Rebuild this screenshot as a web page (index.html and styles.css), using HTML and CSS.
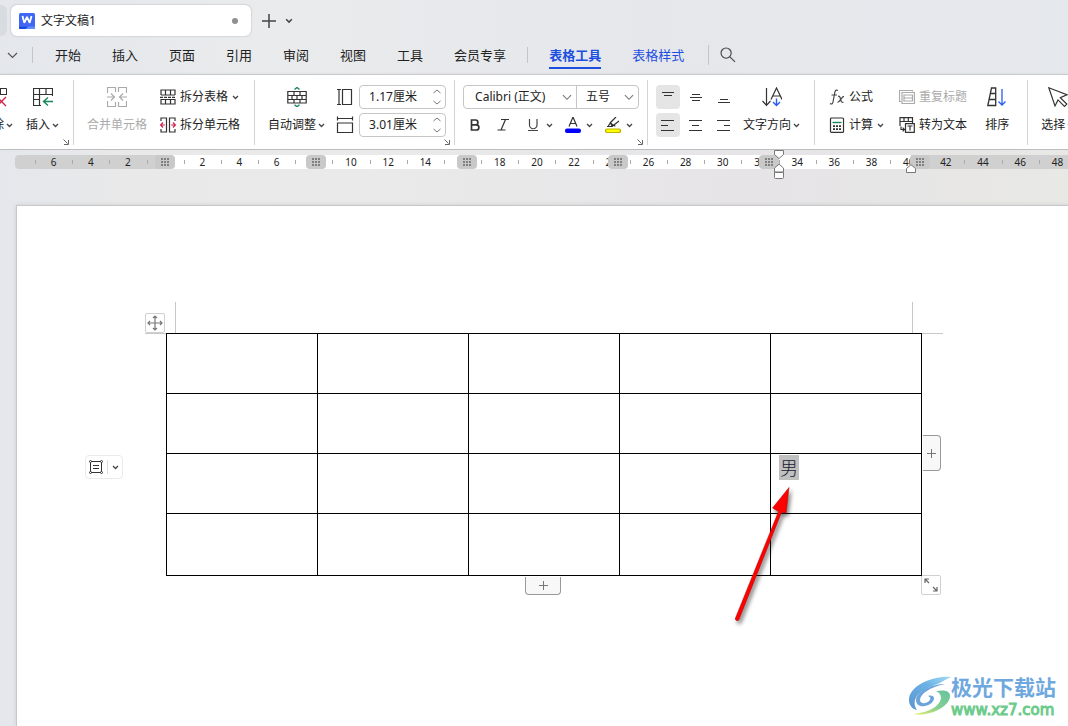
FILE: index.html
```html
<!DOCTYPE html>
<html lang="zh-CN">
<head>
<meta charset="utf-8">
<title>文字文稿1</title>
<link rel="stylesheet" href="styles.css">
</head>
<body>
<svg class="defs" aria-hidden="true">
  <symbol id="chev" viewBox="0 0 7 5"><path d="M1 1l2.500 2.500L6 1" fill="none" stroke="currentColor" stroke-width="1.300"/></symbol>
  <symbol id="wide" viewBox="0 0 11 7"><path d="M1 1l4.500 4.500L10 1" fill="none" stroke="currentColor" stroke-width="1.200"/></symbol>
  <symbol id="launch" viewBox="0 0 6 6"><path d="M.5.5l4 4M5.500 1v4.500H1" fill="none" stroke="currentColor"/></symbol>
  <symbol id="dots" viewBox="0 0 8 8"><path d="M0 1h2M3 1h2M6 1h2M0 4h2M3 4h2M6 4h2M0 7h2M3 7h2M6 7h2" stroke="#808080" stroke-width="2"/></symbol>
  <symbol id="indent" viewBox="0 0 10 9"><path d="M.5 8.500v-4L5 .7l4.500 3.800v4z" fill="#fff" stroke="#777"/></symbol>
</svg>

<header class="titlebar">
  <span class="tab-stub"></span>
  <div class="doc-tab">
    <svg class="logo" viewBox="0 0 16 16"><rect width="16" height="16" rx="1.500" fill="#3f66f5"/><path d="M0 13.500h16V15a1 1 0 0 1-1 1H1a1 1 0 0 1-1-1z" fill="#5c8dfb"/><path d="M0 13.500h9L6.500 16H1a1 1 0 0 1-1-1z" fill="#1747dd"/><path d="M3.500 3l1.800 6.800L8 4l2.700 5.800L12.500 3" fill="none" stroke="#fff" stroke-width="1.800" stroke-linejoin="bevel"/></svg>
    <span class="doc-name">文字文稿1</span>
    <span class="unsaved"></span>
  </div>
  <button class="plain new-tab" aria-label="新建"><svg width="14" height="14"><path d="M7 0v14M0 7h14" stroke="#444" stroke-width="1.500"/></svg></button>
  <button class="plain" aria-label="标签列表"><svg class="chev big-chev"><use href="#chev"/></svg></button>
</header>

<nav class="menubar">
  <button class="plain" aria-label="更多"><svg class="wide-chev"><use href="#wide"/></svg></button>
  <span class="sep first"></span>
  <button class="plain">开始</button>
  <button class="plain">插入</button>
  <button class="plain">页面</button>
  <button class="plain">引用</button>
  <button class="plain">审阅</button>
  <button class="plain">视图</button>
  <button class="plain">工具</button>
  <button class="plain">会员专享</button>
  <span class="sep mid"></span>
  <button class="plain context active">表格工具</button>
  <button class="plain context">表格样式</button>
  <span class="sep last"></span>
  <button class="plain search" aria-label="搜索"><svg width="16" height="16" viewBox="0 0 17 17" fill="none" stroke="#444" stroke-width="1.200"><circle cx="6.500" cy="6.500" r="5.400"/><path d="M10.500 10.500l5.500 5.300"/></svg></button>
</nav>

<section class="ribbon">
  <div class="group g-edit">
    <button class="big">
      <svg width="20" height="20" viewBox="0 0 20 20" fill="none" stroke="#333"><path d="M8 18.500H.5v-17h19V8M.5 7.500h19M6.500 1.500v17M.5 12.500h10M13.500 1.500v6"/><path d="M10 10l9 9M19 10l-9 9" stroke="#d4224c" stroke-width="1.300"/></svg>
      <span class="label">删除<svg class="chev"><use href="#chev"/></svg></span>
    </button>
    <button class="big">
      <svg width="20" height="20" viewBox="0 0 20 20" fill="none" stroke="#333" stroke-width="1.200"><path d="M8 18.500H.5v-17h19V9M.5 7.500h19M6.500 1.500v17M.5 12.500h6M13 1.500v6"/><path d="M20 14.500h-9M15 10.500l-4.500 4 4.500 4" stroke="#16885a" stroke-width="1.400"/></svg>
      <span class="label">插入<svg class="chev"><use href="#chev"/></svg></span>
    </button>
    <svg class="launcher"><use href="#launch"/></svg>
  </div>

  <div class="group g-merge">
    <button class="big" disabled>
      <svg width="20" height="20" viewBox="0 0 20 20" fill="none" stroke="#aaa" stroke-width="1.200"><path d="M.5 6V.5h8V5M11.500 5V.5h8V6M.5 14v5.500h8V15M11.500 15v4.500h8V14M0 10h7M4 6.500L7.500 10 4 13.500M20 10h-7M16 6.500L12.500 10l3.500 3.500"/></svg>
      <span class="label">合并单元格</span>
    </button>
    <div class="stack">
      <button class="line">
        <svg width="16" height="16" viewBox="0 0 16 16" fill="none" stroke="#333" stroke-width="1.200"><path d="M1 6V1h14v5M1 6h14M5.500 1v5M10.500 1v5M1 10.500h14V15H1zM5.500 10.500V15M10.500 10.500V15"/><path d="M0 8.300h16" stroke-dasharray="3 1"/></svg>
        拆分表格<svg class="chev"><use href="#chev"/></svg>
      </button>
      <button class="line">
        <svg width="16" height="16" viewBox="0 0 16 16" fill="none" stroke="#333" stroke-width="1.200"><path d="M1 4V1h5.500v14H1v-3M15 4V1H9.500v14H15v-3"/><path d="M5 8H1M3 5.500L.7 8 3 10.500M11 8H15M13 5.500L15.300 8 13 10.500" stroke="#d4224c"/></svg>
        拆分单元格
      </button>
    </div>
  </div>

  <div class="group g-size">
    <button class="big">
      <svg width="20" height="20" viewBox="0 0 20 20" fill="none" stroke="#333" stroke-width="1.200"><path d="M.8 4.500h18.400v11.500H.8zM.8 8.500h18.400M.8 12.500h18.400M7 4.500v4M13 4.500v4M10 8.500v4M5 8.500v4M15 8.500v4M7 12.500V16M13 12.500V16"/><path d="M7.500 2.500L10 .5l2.500 2M7.500 17.700l2.500 2 2.500-2" stroke="#16885a" stroke-width="1.400"/></svg>
      <span class="label">自动调整<svg class="chev"><use href="#chev"/></svg></span>
    </button>
    <div class="stack">
      <label class="field">
        <svg width="18" height="18" viewBox="0 0 18 18" fill="none" stroke="#333" stroke-width="1.200"><path d="M3 1.500v15M1 1.500h4M1 16.500h4M6.500 1.500h9v15h-9z"/></svg>
        <span class="spin"><input type="text" value="1.17厘米" aria-label="高度"><span class="arrows"><svg viewBox="0 0 8 5"><path d="M.5 4L4 1l3.500 3" fill="none" stroke="#777"/></svg><svg viewBox="0 0 8 5"><path d="M.5 1L4 4l3.500-3" fill="none" stroke="#777"/></svg></span></span>
      </label>
      <label class="field">
        <svg width="18" height="18" viewBox="0 0 18 18" fill="none" stroke="#333" stroke-width="1.200"><path d="M1.500 2.500h15M1.500.5v4M16.500.5v4M1.500 7h15v9.500h-15z"/></svg>
        <span class="spin"><input type="text" value="3.01厘米" aria-label="宽度"><span class="arrows"><svg viewBox="0 0 8 5"><path d="M.5 4L4 1l3.500 3" fill="none" stroke="#777"/></svg><svg viewBox="0 0 8 5"><path d="M.5 1L4 4l3.500-3" fill="none" stroke="#777"/></svg></span></span>
      </label>
    </div>
    <svg class="launcher"><use href="#launch"/></svg>
  </div>

  <div class="group g-font">
    <div class="stack">
      <div class="row">
        <div class="combo">
          <span class="pick family"><select aria-label="字体"><option>Calibri (正文)</option></select><svg class="pick-chev"><use href="#wide"/></svg></span>
          <span class="pick size"><select aria-label="字号"><option>五号</option></select><svg class="pick-chev"><use href="#wide"/></svg></span>
        </div>
      </div>
      <div class="row formats">
        <button class="fmt" aria-label="加粗"><svg width="16" height="16" viewBox="0 0 16 16" fill="none" stroke="#333" stroke-width="1.700"><path d="M4.500 3h4a2.400 2.400 0 0 1 0 4.800h-4zM4.500 7.800h4.800a2.500 2.500 0 0 1 0 5.200H4.500z"/></svg></button>
        <button class="fmt" aria-label="倾斜"><svg width="18" height="16" viewBox="0 0 18 16" fill="none" stroke="#333" stroke-width="1.200"><path d="M6 2.500h8M2.500 13h8M10.500 2.500L6 13"/></svg></button>
        <button class="fmt" aria-label="下划线"><svg width="16" height="16" viewBox="0 0 16 16" fill="none" stroke="#444" stroke-width="1.200"><path d="M4.500 2v6a3.500 3.500 0 0 0 7.500 0V2M3 13.500h10"/></svg><svg class="chev"><use href="#chev"/></svg></button>
        <button class="fmt" aria-label="字体颜色"><svg width="16" height="16" viewBox="0 0 16 16" fill="none" stroke="#333" stroke-width="1.200"><path d="M4 9.500L8 0l4 9.500M5.300 6.500h5.400"/><rect y="11.500" width="16" height="4.500" rx="2" fill="#00f" stroke="none"/></svg><svg class="chev"><use href="#chev"/></svg></button>
        <button class="fmt" aria-label="突出显示"><svg width="16" height="16" viewBox="0 0 16 16" fill="none" stroke="#333" stroke-width="1.200"><path d="M2 9.500h5L5.500 5.500 11 0M7 9.500L14 4M3 9.500l2.500-4 2.500 3M9 7l1 2.500"/><rect x=".5" y="12" width="15" height="3.500" rx="1.700" fill="#ff0" stroke="#bbb500"/></svg><svg class="chev"><use href="#chev"/></svg></button>
      </div>
    </div>
    <svg class="launcher"><use href="#launch"/></svg>
  </div>

  <div class="group g-align">
    <div class="aligns">
      <button class="tool on" aria-label="靠上"><svg viewBox="0 0 14 14"><path d="M1 2.500h12M3 5.500h8"/></svg></button>
      <button class="tool" aria-label="垂直居中"><svg viewBox="0 0 14 14"><path d="M3 4.500h8M1 7.500h12M3 10.500h8"/></svg></button>
      <button class="tool" aria-label="靠下"><svg viewBox="0 0 14 14"><path d="M3 9.500h8M1 12.500h12"/></svg></button>
      <button class="tool on" aria-label="左对齐"><svg viewBox="0 0 14 14"><path d="M0 2.500h13M0 7.500h7M0 12.500h13"/></svg></button>
      <button class="tool" aria-label="水平居中"><svg viewBox="0 0 14 14"><path d="M0 2.500h13M3 7.500h7M0 12.500h13"/></svg></button>
      <button class="tool" aria-label="右对齐"><svg viewBox="0 0 14 14"><path d="M0 2.500h13M7 7.500h6M0 12.500h13"/></svg></button>
    </div>
    <button class="big">
      <svg width="20" height="20" viewBox="0 0 20 20" fill="none" stroke="#333" stroke-width="1.200"><path d="M4.500 1v17M.5 14l4 4.300 4-4.300M9 12.500L14.500 1 20 12.500M10.500 9h8"/><path d="M14.500 11.500v7M11 15l3.500 3.500L18 15" stroke="#2a5cf0" stroke-width="1.400"/></svg>
      <span class="label">文字方向<svg class="chev"><use href="#chev"/></svg></span>
    </button>
  </div>

  <div class="group g-data">
    <div class="stack">
      <button class="line">
        <svg width="16" height="16" viewBox="0 0 16 16" fill="none" stroke="#444" stroke-width="1.200"><path d="M9 1.500C7 .3 6.200 1.500 5.800 3.500L4 13c-.4 2-1.500 2.500-3 1.500M2.500 6H8M9 7.500c1.500-.8 2 .2 2.500 2.500s1 4 3 3M15 7.300c-2.500 0-4 6-6.500 6"/></svg>
        公式
      </button>
      <button class="line">
        <svg width="16" height="16" viewBox="0 0 16 16" fill="none" stroke="#333" stroke-width="1.200"><rect x="1.500" y="1" width="13" height="14.400" rx="1"/><path d="M3.500 5.500h9" stroke="#16885a" stroke-width="1.400"/><path d="M4 9.200h2M7 9.200h2M10 9.200h2M4 12.200h2M7 12.200h2M10 12.200h2" stroke-width="1.700"/></svg>
        计算<svg class="chev"><use href="#chev"/></svg>
      </button>
    </div>
    <div class="stack">
      <button class="line" disabled>
        <svg width="16" height="16" viewBox="0 0 16 16" fill="none" stroke="#aaa" stroke-width="1.200"><path d="M2 12.500H.5v-11h13v1M3 3.500h12.500v11H3zM5 6h8.500v6H5zM5 9h8.500"/></svg>
        重复标题
      </button>
      <button class="line">
        <svg width="16" height="16" viewBox="0 0 16 16" fill="none" stroke="#333" stroke-width="1.200"><path d="M1 9V.7h12.500V6M1 4.500h12.500M5 .7v3.800M9.300.7v3.800M6.500 6.700h8.800v8.700H6.500zM8.500 9h5M11 9v4.500M2 9.500v3h3M3.700 10.700l1.700 1.800-1.700 1.800"/></svg>
        转为文本
      </button>
    </div>
    <button class="big sort">
      <svg width="20" height="20" viewBox="0 0 20 20" fill="none" stroke="#333" stroke-width="1.300"><path d="M.8 18.500L4.500 1h4.200v17.500zM3.500 6.500h5M2 12.500h6.500"/><path d="M15 2v16M11.500 14.500L15 18l3.500-3.500" stroke="#2a5cf0"/></svg>
      <span class="label">排序</span>
    </button>
  </div>

  <div class="group g-select">
    <button class="big">
      <svg width="20" height="20" viewBox="0 0 20 20" fill="none" stroke="#333" stroke-width="1.200"><path d="M.8.8l18 7-6.500 2.800 6.500 6.500-2.300 2.300-6.500-6.500-3 6z"/></svg>
      <span class="label">选择<svg class="chev"><use href="#chev"/></svg></span>
    </button>
  </div>
</section>

<main class="workspace">
  <div class="ruler">
    <div class="scale">
      <span>6</span><span>4</span><span>2</span><span></span><span>2</span><span>4</span><span>6</span><span></span><span>10</span><span>12</span><span>14</span><span></span><span>18</span><span>20</span><span>22</span><span>24</span><span>26</span><span>28</span><span>30</span><span>32</span><span>34</span><span>36</span><span>38</span><span>40</span><span>42</span><span>44</span><span>46</span><span>48</span>
    </div>
    <span class="stop s1"><svg><use href="#dots"/></svg></span>
    <span class="stop s2"><svg><use href="#dots"/></svg></span>
    <span class="stop s3"><svg><use href="#dots"/></svg></span>
    <span class="stop s4"><svg><use href="#dots"/></svg></span>
    <span class="stop s5"><svg><use href="#dots"/></svg></span>
    <span class="stop s6"><svg><use href="#dots"/></svg></span>
    <svg class="indent-left" viewBox="0 0 10 30" fill="#fff" stroke="#777"><path d="M.5.5h9v4L5 8.500.5 4.500zM.5 22v-4L5 14.200 9.500 18v4zM.5 22.500h9v5a1 1 0 0 1-1 1h-7a1 1 0 0 1-1-1z"/></svg>
    <svg class="indent-right"><use href="#indent"/></svg>
  </div>

  <article class="sheet">
    <div class="table-wrap">
      <span class="crop tl"></span>
      <span class="crop tr"></span>
      <table class="grid">
        <tbody>
          <tr><td></td><td></td><td></td><td></td><td></td></tr>
          <tr><td></td><td></td><td></td><td></td><td></td></tr>
          <tr><td></td><td></td><td></td><td></td><td><span class="selected">男</span></td></tr>
          <tr class="tall"><td></td><td></td><td></td><td></td><td></td></tr>
        </tbody>
      </table>
      <button class="handle move" aria-label="移动表格"><svg width="16" height="16" viewBox="0 0 16 16" fill="none" stroke="#777" stroke-width="1.200"><path d="M8 1v14M1 8h14M6 3l2-2 2 2M6 13l2 2 2-2M3 6L1 8l2 2M13 6l2 2-2 2"/></svg></button>
      <button class="handle resize" aria-label="缩放表格"><svg width="16" height="16" viewBox="0 0 16 16" fill="none" stroke="#666" stroke-width="1.200"><path d="M6 6L2 2M2 6V2h4M10 10l4 4M14 10v4h-4"/></svg></button>
      <button class="handle add-col" aria-label="添加列"><svg width="9" height="9"><path d="M4.500 0v9M0 4.500h9" stroke="#777"/></svg></button>
      <button class="handle add-row" aria-label="添加行"><svg width="9" height="9"><path d="M4.500 0v9M0 4.500h9" stroke="#777"/></svg></button>
      <button class="handle options" aria-label="布局选项">
        <svg width="14" height="14" viewBox="0 0 14 14" fill="none" stroke="#333"><path d="M1.500 1.500h11v11h-11zM4 5.500h6M4 8.500h6"/><g fill="#fff"><circle cx="1.500" cy="1.500" r="1"/><circle cx="12.500" cy="1.500" r="1"/><circle cx="1.500" cy="12.500" r="1"/><circle cx="12.500" cy="12.500" r="1"/></g></svg>
        <span class="bar"></span>
        <svg class="chev"><use href="#chev"/></svg>
      </button>
      <svg class="arrow" viewBox="0 0 70 145"><path d="M8.500 132L51.500 25.500l-6-3.500L62 1.500 59 27l-4.500-.5L12 133.500a1.800 1.800 0 0 1-3.500-1.500z" fill="#f00" stroke="#a00" stroke-width=".5"/></svg>
    </div>
  </article>
</main>

<aside class="watermark">
  <svg width="42" height="42" viewBox="0 0 42 42">
    <defs>
      <linearGradient id="blue" x1="0" y1="1" x2="1" y2="0"><stop offset="0" stop-color="#5a94d2"/><stop offset=".6" stop-color="#6bb3e4"/><stop offset="1" stop-color="#a4dcf4"/></linearGradient>
      <linearGradient id="green" x1="0" y1="1" x2="1" y2="0"><stop offset="0" stop-color="#e9ee6a"/><stop offset=".5" stop-color="#84cf93"/><stop offset="1" stop-color="#66c2a0"/></linearGradient>
    </defs>
    <path d="M42 2C26 0 0 10 0 25c0 5 3 9 8 10-5-7-2-15 7-20C22 11 30 9 36 5z" fill="url(#blue)"/>
    <path d="M36 9C22 9 7 17 7 25c0 5 4 7 9 6 5-1 9-4 9-8 0-2-3-3-6-2 3 1 3 3 1 5-3 3-9 3-9-1 0-6 10-13 25-16z" fill="#6ba4dc"/>
    <path d="M27 16c7-1 14-1 14 5C41 31 22 42 4 39c10-1 21-4 26-11 3-4 3-9-3-12z" fill="url(#green)"/>
  </svg>
  <div class="mark-text"><span class="mark-name">极光下载站</span><span class="mark-url">www.xz7.com</span></div>
</aside>
</body>
</html>
```
FILE: styles.css
```css
* { box-sizing: border-box; }

body {
  position: relative;
  display: flex;
  flex-direction: column;
  min-height: 100vh;
  margin: 0;
  overflow: hidden;
  background: linear-gradient(90deg, #e4e7ec, #e9ebec 25%, #e6e7eb 60%, #e5e8ed);
  color: #222;
  font: 12px/16px "Noto Sans", "Noto Sans CJK SC", sans-serif;
}

svg { display: block; flex: none; }
.defs { position: absolute; width: 0; height: 0; }

button, input, select { font: inherit; color: inherit; }
button {
  display: flex;
  align-items: center;
  margin: 0;
  padding: 0;
  border: 0;
  background: none;
  white-space: nowrap;
}
button:disabled { color: #aaa; }

.chev { width: 7px; height: 5px; color: #444; }
.launcher { position: absolute; right: 4px; bottom: 0; width: 6px; height: 6px; color: #666; }

/* Title bar */
.titlebar { display: flex; align-items: center; padding-top: 5px; }
.tab-stub { width: 7px; height: 31px; border-radius: 0 6px 6px 0; background: #d8dbdf; }
.doc-tab {
  display: flex;
  align-items: center;
  gap: 6px;
  width: 240px;
  height: 31px;
  margin-left: 4px;
  padding: 0 13px 0 8px;
  border-radius: 6px;
  background: #fff;
  box-shadow: 0 0 2px #aaa;
}
.logo { width: 16px; height: 16px; }
.doc-name { flex: 1; }
.unsaved { width: 6px; height: 6px; border-radius: 50%; background: #909090; }
.new-tab { margin: 0 9px 0 11px; }
.big-chev { width: 8px; height: 6px; }

/* Menu bar */
.menubar {
  display: flex;
  align-items: center;
  height: 39px;
  padding-left: 7px;
  border-bottom: 1px solid #cdcfd2;
  font-size: 13px;
}
.menubar .plain { flex: none; height: 26px; }
.menubar .plain + .plain { margin-left: 31px; }
.wide-chev { width: 11px; height: 7px; color: #555; }
.sep { flex: none; width: 1px; height: 16px; background: #c3c5c9; }
.first { margin: 0 22px 0 14px; }
.mid { margin: 0 21px; }
.last { height: 20px; margin: 0 11px 0 24px; }
.context { color: #1c4fe0; }
.menubar .active { font-weight: 700; box-shadow: inset 0 -2px #1c4fe0; height: 28px; }

/* Ribbon */
.ribbon {
  display: flex;
  padding: 5px 0 4px;
  border-bottom: 1px solid #bdbdbf;
  background: #fff;
  box-shadow: 0 1px 4px #bbb;
}
.group {
  position: relative;
  display: flex;
  flex: none;
  padding: 3px 14px 6px 13px;
  border-right: 1px solid #d4d4d4;
}
.group:last-child { border: 0; }
.big { display: grid; grid-template-rows: 28px 28px; justify-items: center; align-items: center; }
.label { display: flex; align-items: center; gap: 2px; }
.stack { display: grid; grid-template-rows: 28px 28px; }
.row { display: flex; align-items: center; }
.line { gap: 4px; }

.g-edit { gap: 13px; padding-left: 0; }
.g-edit .big:first-child { margin-left: -20px; }
.g-merge { gap: 13px; }
.g-size { padding-right: 8px; gap: 11px; }
.g-font { padding: 3px 8px 6px; }
.g-align { gap: 7px; padding-left: 8px; }
.g-data { gap: 15px; padding: 3px 18px 6px 14px; }
.sort { margin-left: 3px; }

.field { display: flex; align-items: center; gap: 5px; }
.spin, .combo { display: flex; height: 24px; border: 1px solid #c6c6c6; border-radius: 4px; }
.spin { width: 87px; padding-right: 4px; }
.spin input { flex: 1; width: 0; padding: 0 0 0 9px; border: 0; background: none; outline: 0; }
.arrows { display: flex; flex-direction: column; justify-content: space-between; padding: 3px 0; }
.arrows svg { width: 8px; height: 5px; }
.pick { position: relative; display: flex; }
.pick select {
  width: 100%;
  padding: 0 20px 0 11px;
  border: 0;
  background: none;
  appearance: none;
}
.pick-chev { position: absolute; right: 4px; top: 8px; width: 10px; height: 7px; color: #777; pointer-events: none; }
.family { width: 113px; border-right: 1px solid #c6c6c6; }
.size { width: 61px; }
.size select { padding-left: 9px; }
.formats { gap: 12px; padding-left: 4px; }
.fmt { gap: 5px; }

.aligns { display: grid; grid-template: 28px 28px / repeat(3, 24px); column-gap: 4px; align-items: center; }
.tool { justify-content: center; height: 24px; border-radius: 4px; }
.tool svg { width: 14px; height: 14px; fill: none; stroke: #333; }
.on { background: #e5e5e5; }

/* Workspace and ruler */
.workspace {
  display: flex;
  flex: 1;
  flex-direction: column;
  padding-top: 5px;
  background: linear-gradient(90deg, #e4e7ec, #e9e9e9 12%, #eaeaea 35%, #e6e4e7 70%, #e8e8e5);
}
.ruler {
  position: relative;
  height: 14px;
  margin: 0 0 36px 15px;
  border-radius: 4px 0 0 4px;
  background: linear-gradient(90deg, #d0d0d0 150px, #fff 150px, #fff 896px, #d0d0d0 896px);
}
.scale {
  display: grid;
  grid-template-columns: repeat(28, 1fr);
  width: 1041px;
  margin-left: 20px;
  font-size: 10px;
  line-height: 14px;
  text-align: center;
}
.scale span {
  background: linear-gradient(#aaa, #aaa) left center / 1px 4px no-repeat;
}
.stop {
  position: absolute;
  top: 0;
  display: grid;
  place-items: center;
  width: 20px;
  height: 14px;
  border-radius: 4px;
  background: #c9c9c9;
}
.stop svg { width: 8px; height: 8px; }
.s1 { left: 140px; }
.s2 { left: 291px; }
.s3 { left: 442px; }
.s4 { left: 593px; }
.s5 { left: 744px; }
.s6 { left: 895px; }
.indent-left { position: absolute; left: 759px; top: -5px; width: 10px; height: 30px; }
.indent-right { position: absolute; left: 891px; top: 9px; width: 10px; height: 9px; }

/* Document */
.sheet {
  flex: 1;
  margin-left: 16px;
  padding: 127px 146px 150px 149px;
  border: 1px solid #c8c8ca;
  border-width: 1px 0 0 1px;
  background: #fff;
  box-shadow: 0 0 4px #ccc;
}
.table-wrap { position: relative; isolation: isolate; }
.grid {
  width: 100%;
  table-layout: fixed;
  border: 1px solid #000;
  border-width: 1px 0 0 1px;
  border-spacing: 0;
}
.grid td {
  height: 60px;
  padding: 1px 8px;
  border: 1px solid #000;
  border-width: 0 1px 1px 0;
  vertical-align: top;
}
.grid .tall td { height: 62px; }
.selected {
  display: inline-block;
  padding: 0 1px;
  background: #c0c0c0;
  color: #1a1a30;
  font: 300 18px/25px "Noto Sans CJK SC", sans-serif;
}

.crop { position: absolute; z-index: -1; top: -31px; width: 31px; height: 32px; border-bottom: 1px solid #c8c8c8; }
.tl { left: -21px; border-right: 1px solid #c8c8c8; }
.tr { right: -21px; border-left: 1px solid #c8c8c8; }
.handle { position: absolute; justify-content: center; border: 1px solid #d0d0d0; background: #fff; }
.move { left: -21px; top: -20px; width: 20px; height: 20px; border-radius: 2px; }
.resize { right: -19px; bottom: -19px; width: 20px; height: 20px; border-radius: 2px; }
.add-col { right: -19px; top: 102px; width: 18px; height: 36px; border-color: #999; border-left: 0; border-radius: 0 4px 4px 0; background: #f8f8f8; }
.add-row { left: 359px; bottom: -19px; width: 36px; height: 18px; border-color: #999; border-top: 0; border-radius: 0 0 4px 4px; background: #f8f8f8; }
.options { left: -81px; top: 122px; gap: 4px; width: 38px; height: 24px; border-color: #eaeaea; border-radius: 4px; }
.bar { width: 1px; height: 14px; background: #ddd; }
.arrow { position: absolute; right: 125px; top: 153px; width: 70px; height: 145px; filter: drop-shadow(2px 3px 2px #0008); }

/* Site mark */
.watermark { position: absolute; right: 12px; bottom: 6px; display: flex; align-items: center; }
.mark-text { display: flex; flex-direction: column; }
.mark-name { color: #6fa8de; font: 700 21px/28px "Noto Sans CJK SC", sans-serif; }
.mark-url { color: #6ccb8b; font: 15px/20px "DejaVu Sans", sans-serif; -webkit-text-stroke: 1px #6ccb8b; }
```
